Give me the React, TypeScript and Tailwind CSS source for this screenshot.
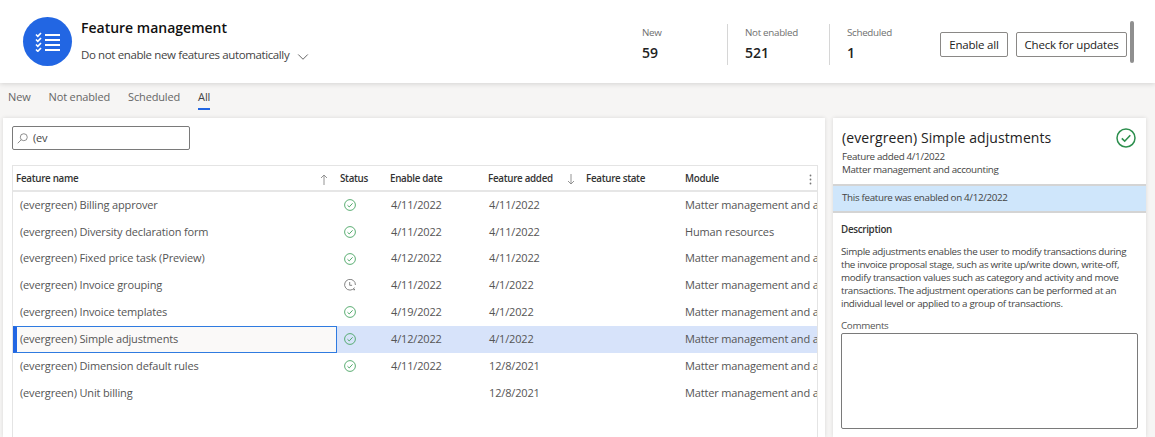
import { ChevronDown } from "lucide-react";

const rows = [
  { name: "(evergreen) Billing approver", status: "ok", date: "4/11/2022", added: "4/11/2022", module: "Matter management and accounting" },
  { name: "(evergreen) Diversity declaration form", status: "ok", date: "4/11/2022", added: "4/11/2022", module: "Human resources" },
  { name: "(evergreen) Fixed price task (Preview)", status: "ok", date: "4/12/2022", added: "4/11/2022", module: "Matter management and accounting" },
  { name: "(evergreen) Invoice grouping", status: "clock", date: "4/11/2022", added: "4/1/2022", module: "Matter management and accounting" },
  { name: "(evergreen) Invoice templates", status: "ok", date: "4/19/2022", added: "4/1/2022", module: "Matter management and accounting" },
  { name: "(evergreen) Simple adjustments", status: "ok", date: "4/12/2022", added: "4/1/2022", module: "Matter management and accounting", selected: true },
  { name: "(evergreen) Dimension default rules", status: "ok", date: "4/11/2022", added: "12/8/2021", module: "Matter management and accounting" },
  { name: "(evergreen) Unit billing", status: "", date: "", added: "12/8/2021", module: "Matter management and accounting" },
];

function CheckCircle({ size = 12, color = "#4aa564" }: { size?: number; color?: string }) {
  return (
    <svg width={size} height={size} viewBox="0 0 20 20" fill="none" stroke={color} strokeWidth="1.5">
      <circle cx="10" cy="10" r="9" />
      <path d="M5.8 10.4l2.9 2.8 5.6-6" strokeWidth="1.6" />
    </svg>
  );
}

function ClockIcon() {
  return (
    <svg width="12" height="12" viewBox="0 0 20 20" fill="none" stroke="#777" strokeWidth="1.5">
      <path d="M17.5 14.5A9 9 0 1 1 19 10" />
      <path d="M9.5 5v5.5h4" />
      <circle cx="17" cy="17.5" r="1.4" fill="#777" stroke="none" />
    </svg>
  );
}

function Stat({ label, value, width, last }: { label: string; value: string; width: string; last?: boolean }) {
  return (
    <div className={`${width} h-[41px] ${last ? "" : "border-r border-[#d6d6d6]"}`}>
      <div className="text-[9.8px] leading-[14px] tracking-[-0.3px] text-[#6f6f6f] mt-[2px]">{label}</div>
      <div className="text-[14px] leading-[20px] mt-[3px] font-semibold text-[#222]">{value}</div>
    </div>
  );
}

export default function App() {
  return (
    <div className="h-[437px] w-[1155px] overflow-hidden bg-[#f6f5f4] font-['Open_Sans','Liberation_Sans',sans-serif] text-[#323130]">
      {/* Top header */}
      <div className="flex h-[83px] items-center bg-white pl-[23px] shadow-[0_1px_5px_rgba(0,0,0,0.14)] relative">
        <div className="flex h-[49px] w-[49px] items-center justify-center rounded-full bg-[#2266e3]">
          <svg width="26" height="20" viewBox="0 0 26 20" fill="none" stroke="#fff">
            <path d="M10 3h15M10 8h15M10 13h15M10 18h15" strokeWidth="2" />
            <path d="M1 2.5l1.8 1.8L6 1M1 7.5l1.8 1.8L6 6M1 12.5l1.8 1.8L6 11M1 17.5l1.8 1.8L6 16" strokeWidth="1.6" />
          </svg>
        </div>
        <div className="ml-[9px] w-[561px]">
          <div className="text-[14px] font-semibold leading-[20px] text-[#111]">Feature management</div>
          <div className="mt-[7px] flex items-center text-[11.5px] leading-[16px] text-[#444] tracking-[-0.38px]">
            Do not enable new features automatically
            <ChevronDown size={18} strokeWidth={1} className="ml-[5px] mt-[3px] text-[#333]" />
          </div>
        </div>
        <div className="mt-[6px] flex items-start">
          <Stat label="New" value="59" width="w-[86px]" />
          <div className="w-[17px]" />
          <Stat label="Not enabled" value="521" width="w-[85px]" />
          <div className="w-[17px]" />
          <Stat label="Scheduled" value="1" width="w-[93px]" last />
        </div>
        <button className="mt-[6px] h-[25px] w-[68px] rounded-[2px] border border-[#8a8886] bg-white text-[11.5px] tracking-[-0.2px] text-[#222]">Enable all</button>
        <button className="mt-[6px] ml-[8px] h-[25px] w-[111px] rounded-[2px] border border-[#8a8886] bg-white text-[11.5px] tracking-[-0.2px] text-[#222]">Check for updates</button>
        <div className="ml-[3px] h-[42px] w-[4px] rounded-full bg-[#8f8f8f]" />
      </div>

      {/* Tabs */}
      <div className="flex h-[35px] gap-[18px] pl-[8px] text-[11px] text-[#666]">
        <span className="pt-[6px] leading-[16px] tracking-[-0.15px]">New</span>
        <span className="pt-[6px] leading-[16px] tracking-[-0.15px]">Not enabled</span>
        <span className="pt-[6px] leading-[16px] tracking-[-0.15px]">Scheduled</span>
        <span className="relative h-[27px] pt-[6px] leading-[16px] tracking-[-0.1px] text-[#444] border-b-2 border-[#2266e3]">All</span>
      </div>

      <div className="flex gap-[8px] pl-[3px]">
        {/* Grid card */}
        <div className="h-[319px] w-[822px] bg-white pl-[9px] pr-[7px] pt-[8px] shadow-[0_0_4px_rgba(0,0,0,0.12)]">
          <div className="flex h-[24px] w-[178px] items-center rounded-[2px] border border-[#7a7a7a] pl-[4px]">
            <svg width="11" height="11" viewBox="0 0 12 12" fill="none" stroke="#777" strokeWidth="0.9">
              <circle cx="7.4" cy="4.6" r="3.8" />
              <path d="M4.6 7.4L0.8 11.2" />
            </svg>
            <span className="ml-[5px] text-[11px] tracking-[-0.2px] text-[#444]">(ev</span>
          </div>

          <div className="mt-[15px] h-[272px] border-l border-r border-t border-[#e4e4e4] overflow-hidden">
            <div className="flex h-[25.5px] items-center border-b-2 border-[#e6e6e6] pt-[4px] text-[9.8px] font-semibold tracking-[-0.3px] text-[#333]">
              <div className="flex w-[327px] items-center justify-between pl-[3px] pr-[12px]">
                Feature name
                <svg width="8" height="11" viewBox="0 0 8 11" fill="none" stroke="#888" strokeWidth="0.9"><path d="M4 11V1M1 4l3-3 3 3" /></svg>
              </div>
              <div className="w-[50px]">Status</div>
              <div className="w-[98px]">Enable date</div>
              <div className="flex w-[98px] items-center">
                Feature added
                <svg className="ml-[14px]" width="8" height="11" viewBox="0 0 8 11" fill="none" stroke="#888" strokeWidth="0.9"><path d="M4 0v10M1 7l3 3 3-3" /></svg>
              </div>
              <div className="w-[99px]">Feature state</div>
              <div className="flex flex-1 items-center justify-between pr-[5px]">
                Module
                <svg width="3" height="11" viewBox="0 0 3 11" fill="#777"><circle cx="1.5" cy="1.5" r="0.9" /><circle cx="1.5" cy="5.5" r="0.9" /><circle cx="1.5" cy="9.5" r="0.9" /></svg>
              </div>
            </div>
            {rows.map((r) => (
              <div key={r.name} className={`flex h-[26.85px] items-center text-[11px] tracking-[-0.15px] text-[#555] ${r.selected ? "bg-[#d7e3fa]" : ""}`}>
                <div className={`flex h-full w-[324px] items-center ${r.selected ? "border border-l-[4px] border-[#2f7be0] border-l-[#2266e3] bg-[#faf9f8] pl-[3px]" : "pl-[7px]"}`}>
                  {r.name}
                </div>
                <div className="flex w-[50px] justify-start pl-[7px]">
                  {r.status === "ok" && <CheckCircle />}
                  {r.status === "clock" && <ClockIcon />}
                </div>
                <div className="w-[98px] pl-[4px]">{r.date}</div>
                <div className="w-[98px] pl-[4px]">{r.added}</div>
                <div className="w-[99px]" />
                <div className="min-w-0 flex-1 overflow-hidden whitespace-nowrap pl-[3px]">{r.module}</div>
              </div>
            ))}
          </div>
        </div>

        {/* Detail panel */}
        <div className="h-[319px] w-[313px] bg-white shadow-[0_0_4px_rgba(0,0,0,0.12)]">
          <div className="flex h-[66px] justify-between pl-[9px] pr-[10px] pt-[9px]">
            <div>
              <div className="text-[14px] font-medium leading-[22px] tracking-[0.08px] text-[#222]">(evergreen) Simple adjustments</div>
              <div className="mt-[1px] text-[9.8px] leading-[13px] tracking-[-0.32px] text-[#444]">Feature added 4/1/2022</div>
              <div className="text-[9.8px] leading-[13px] tracking-[-0.32px] text-[#444]">Matter management and accounting</div>
            </div>
            <div className="pt-[1px]"><CheckCircle size={20} color="#2d8f4e" /></div>
          </div>
          <div className="flex h-[29px] items-center border-y-2 border-[#d4d4d4] bg-[#cfe6fb] pl-[9px] text-[9.8px] tracking-[-0.32px] text-[#444]">
            This feature was enabled on 4/12/2022
          </div>
          <div className="px-[8px] pt-[10px]">
            <div className="text-[9.8px] font-semibold leading-[14px] tracking-[-0.3px] text-[#333]">Description</div>
            <p className="mt-[8px] text-[9.8px] leading-[13px] tracking-[-0.32px] text-[#444]">
              Simple adjustments enables the user to modify transactions during the invoice proposal stage, such as write up/write down, write-off, modify transaction values such as category and activity and move transactions. The adjustment operations can be performed at an individual level or applied to a group of transactions.
            </p>
            <div className="mt-[9px] text-[9.8px] leading-[13px] tracking-[-0.3px] text-[#555]">Comments</div>
            <div className="mt-[1px] h-[96px] w-[297px] rounded-[2px] border border-[#7a7a7a]" />
          </div>
        </div>
      </div>
    </div>
  );
}
